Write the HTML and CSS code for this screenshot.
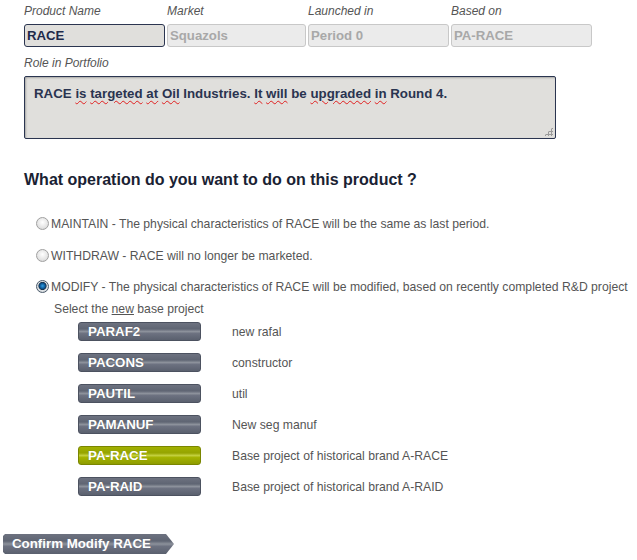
FILE: index.html
```html
<!DOCTYPE html>
<html>
<head>
<meta charset="utf-8">
<link rel="stylesheet" href="styles.css">
</head>
<body>
<div class="page">
  <div class="fields">
    <div class="field">
      <label class="lbl">Product Name</label>
      <div class="inp active">RACE</div>
    </div>
    <div class="field">
      <label class="lbl">Market</label>
      <div class="inp">Squazols</div>
    </div>
    <div class="field">
      <label class="lbl">Launched in</label>
      <div class="inp">Period 0</div>
    </div>
    <div class="field">
      <label class="lbl">Based on</label>
      <div class="inp">PA-RACE</div>
    </div>
  </div>
  <label class="lbl role">Role in Portfolio</label>
  <div class="textarea">RACE <span class="sp">is</span> <span class="sp">targeted</span> <span class="sp">at</span> <span class="sp">Oil</span> Industries. <span class="sp">It</span> <span class="sp">will</span> be <span class="sp">upgraded</span> <span class="sp">in</span> Round 4.<span class="grip"></span></div>

  <h2 class="question">What operation do you want to do on this product ?</h2>

  <div class="options">
    <div class="opt"><span class="radio"></span>MAINTAIN - The physical characteristics of RACE will be the same as last period.</div>
    <div class="opt"><span class="radio"></span>WITHDRAW - RACE will no longer be marketed.</div>
    <div class="opt"><span class="radio checked"></span>MODIFY - The physical characteristics of RACE will be modified, based on recently completed R&amp;D project</div>
  </div>

  <div class="select-note">Select the <u>new</u> base project</div>
  <div class="projects">
    <div class="proj"><span class="pbtn">PARAF2</span><span class="pdesc">new rafal</span></div>
    <div class="proj"><span class="pbtn">PACONS</span><span class="pdesc">constructor</span></div>
    <div class="proj"><span class="pbtn">PAUTIL</span><span class="pdesc">util</span></div>
    <div class="proj"><span class="pbtn">PAMANUF</span><span class="pdesc">New seg manuf</span></div>
    <div class="proj"><span class="pbtn green">PA-RACE</span><span class="pdesc">Base project of historical brand A-RACE</span></div>
    <div class="proj"><span class="pbtn">PA-RAID</span><span class="pdesc">Base project of historical brand A-RAID</span></div>
  </div>

  <div class="confirm">Confirm Modify RACE</div>
</div>
</body>
</html>
```
FILE: styles.css
```css
html, body {
  margin: 0;
  padding: 0;
  background: #fff;
}
body {
  font-family: "Liberation Sans", Arial, sans-serif;
  color: #555;
}
.page {
  padding: 4px 0 0 0;
  width: 637px;
  height: 560px;
  overflow: hidden;
}
.fields {
  display: flex;
  gap: 2px;
  padding-left: 24px;
}
.field {
  display: flex;
  flex-direction: column;
}
.lbl {
  font-style: italic;
  font-size: 12px;
  color: #555;
  height: 15px;
  line-height: 15px;
  margin-bottom: 5px;
}
.inp {
  width: 137px;
  height: 21px;
  border: 1px solid #c8c8c8;
  border-radius: 3px;
  background: #ebebeb;
  font-weight: bold;
  font-size: 13.2px;
  color: #a8a8a8;
  line-height: 22px;
  padding-left: 2px;
  box-sizing: content-box;
}
.field:nth-child(2) .inp { width: 135px; }
.field:nth-child(3) .inp { width: 137px; }
.inp.active {
  border-color: #2b3550;
  background: #e0dfdc;
  color: #1e2a4a;
}
.role {
  display: block;
  margin-left: 24px;
  margin-top: 9px;
  margin-bottom: 5px;
}
.textarea {
  position: relative;
  margin-left: 24px;
  width: 515px;
  height: 48px;
  border: 1px solid #2b3550;
  border-radius: 2px;
  background: #e0dfdc;
  box-shadow: inset 1px 1px 2px rgba(0,0,0,0.25);
  padding: 9px 6px 4px 9px;
  font-size: 13.3px;
  font-weight: bold;
  color: #2a3450;
}
.sp {
  text-decoration: underline wavy #e02020;
  text-decoration-thickness: 1px;
  text-underline-offset: 2px;
}
.grip {
  position: absolute;
  right: 2px;
  bottom: 2px;
  width: 9px;
  height: 9px;
  background:
    radial-gradient(circle, #9a9a9a 1px, transparent 1.2px) 0 0 / 3px 3px;
  clip-path: polygon(100% 0, 100% 100%, 0 100%);
}
.question {
  margin: 31px 0 0 24px;
  font-size: 16px;
  font-weight: bold;
  color: #1a2233;
  line-height: 20px;
}
.options {
  margin-top: 27px;
  margin-left: 36px;
  display: flex;
  flex-direction: column;
  gap: 16.5px;
}
.opt {
  display: flex;
  align-items: center;
  font-size: 12.2px;
  color: #555;
  line-height: 15px;
  white-space: nowrap;
}
.radio {
  display: inline-block;
  width: 11px;
  height: 11px;
  border-radius: 50%;
  border: 1px solid #a0a0a0;
  background: radial-gradient(circle at 50% 40%, #fff 0%, #e4e4e4 60%, #cfcfcf 100%);
  margin-right: 2px;
  box-sizing: content-box;
  position: relative;
  top: -1px;
}
.radio.checked {
  border-color: #4a5a6a;
  background: radial-gradient(circle at 50% 45%, #2d9ee6 0%, #0a4f8a 35%, #18324c 45%, #dfe3e6 55%, #c4c8cc 100%);
}
.select-note {
  margin-left: 54px;
  margin-top: 7px;
  font-size: 12.2px;
  color: #555;
  line-height: 15px;
}
.projects {
  margin-left: 78px;
  margin-top: 5px;
  display: flex;
  flex-direction: column;
  gap: 12px;
}
.proj {
  display: flex;
  align-items: center;
  height: 19px;
}
.pbtn {
  display: block;
  height: 19px;
  box-sizing: border-box;
  padding-left: 9px;
  border-radius: 3px;
  border: 1px solid #4c5260;
  background: linear-gradient(#6d7280 0%, #5f6573 35%, #8c919b 50%, #6c7180 62%, #5a606e 100%);
  color: #fff;
  font-weight: bold;
  font-size: 13.3px;
  line-height: 17px;
  text-shadow: 0 0 1px rgba(0,0,0,0.3);
  width: 123px;
}
.pbtn.green {
  border-color: #7a8600;
  background: linear-gradient(#a2b100 0%, #95a400 35%, #c2cf3c 50%, #a4b300 62%, #8e9c00 100%);
}
.pdesc {
  margin-left: 31px;
  font-size: 12.2px;
  color: #555;
}
.confirm {
  margin-top: 38px;
  margin-left: 3px;
  width: 171px;
  height: 20px;
  box-sizing: border-box;
  padding-left: 9px;
  color: #fff;
  font-weight: bold;
  font-size: 13.3px;
  line-height: 20px;
  background: linear-gradient(#6d7280 0%, #5f6573 35%, #8c919b 50%, #6c7180 62%, #5a606e 100%);
  clip-path: polygon(0 2px, 2px 0, 163px 0, 171px 10px, 163px 20px, 2px 20px, 0 18px);
}
```
